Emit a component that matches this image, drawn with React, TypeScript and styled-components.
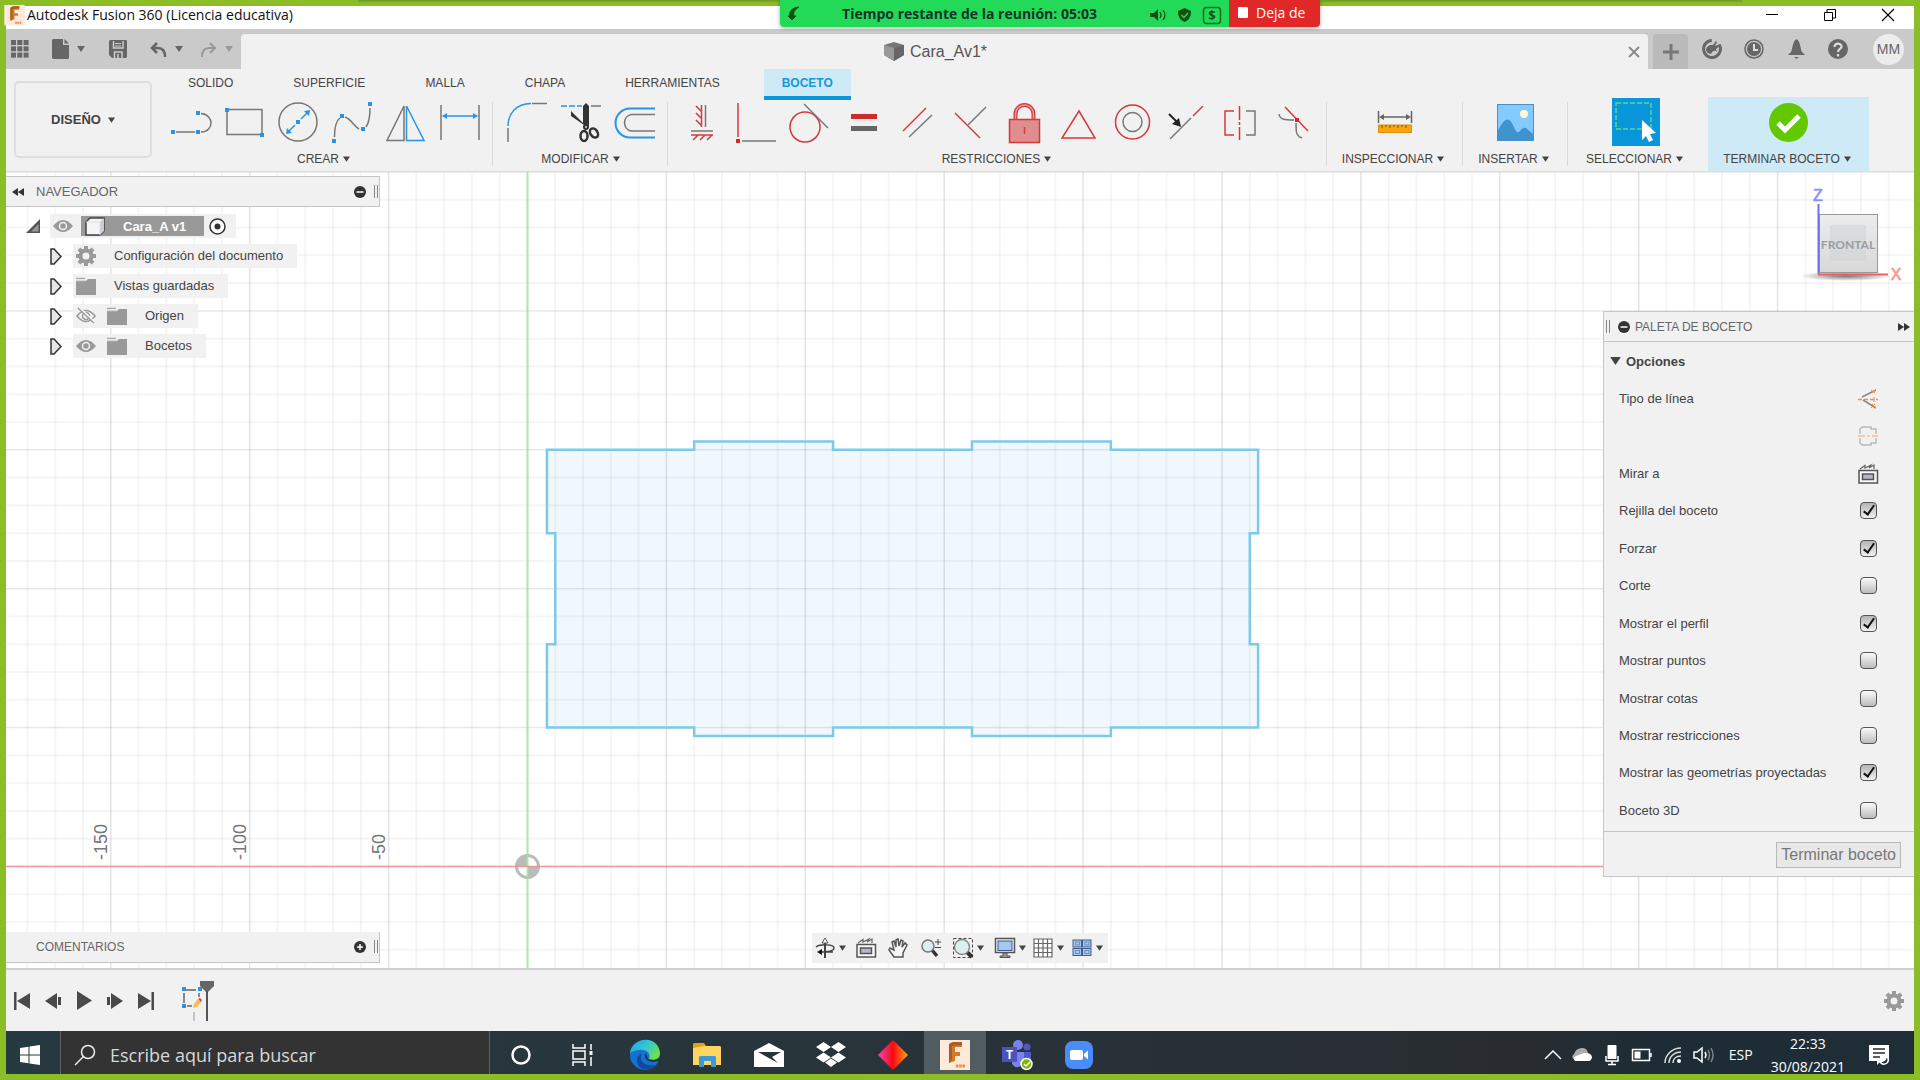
import React from "react";
import styled, { createGlobalStyle, css } from "styled-components";

const UI = `"Liberation Sans", Arial, sans-serif`;
const SYS = `"Open Sans", "Noto Sans", sans-serif`;
const RED = "#d6393b";
const BLUE = "#2a93e6";
const GRAY = "#777";

const Global = createGlobalStyle`
  *, *::before, *::after { box-sizing: border-box; }
  body { margin: 0; font-family: ${UI}; font-size: 13px; color: #444; }
  button, input { font: inherit; color: inherit; }
  button { margin: 0; padding: 0; border: 0; background: none; }
  svg { display: block; flex: none; overflow: visible; }
  ul { list-style: none; margin: 0; padding: 0; }
  h1, h2, h3 { margin: 0; font-weight: 400; }
`;

const Frame = styled.div`
  position: relative;
  display: flex;
  flex-direction: column;
  height: 100vh;
  padding: 6px;
  background: #8bbd27;
  overflow: hidden;
`;

/* ---------- title bar ---------- */
const TitleBar = styled.header`
  display: flex;
  align-items: center;
  height: 23px;
  padding: 0 14px 6px 1px;
  gap: 5px;
  background: #fff;
  flex: none;
`;
const WindowTitle = styled.h1`
  flex: 1;
  font: 14px/16px ${SYS};
  color: #111;
  white-space: nowrap;
`;
const WindowButtons = styled.div`
  display: flex;
  gap: 34px;
`;
const WinButton = styled.button`
  width: 24px;
  height: 16px;
  display: grid;
  place-items: center;
`;

/* ---------- meeting banner ---------- */
const Banner = styled.aside`
  position: absolute;
  top: 0;
  left: 780px;
  display: flex;
  width: 540px;
  height: 27px;
  border-radius: 0 0 4px 4px;
  overflow: hidden;
  box-shadow: 0 1px 4px rgba(0, 0, 0, 0.35);
  font: 14px/20px ${SYS};
`;
const BannerShadow = styled.div`
  position: absolute;
  top: 0;
  left: 358px;
  right: 178px;
  height: 3px;
  background: linear-gradient(#6f9722, #8bbd27);
`;
const BannerInfo = styled.div`
  display: flex;
  align-items: center;
  width: 449px;
  padding: 0 8px;
  background: #22da58;
  color: #14332c;
  font-weight: 700;
`;
const BannerText = styled.span`
  flex: 1;
  text-align: center;
  padding-right: 12px;
  white-space: nowrap;
`;
const BannerIcons = styled.div`
  display: flex;
  align-items: center;
  gap: 12px;
  padding-top: 3px;
`;
const BannerStop = styled.button`
  display: flex;
  flex: 1;
  align-items: center;
  gap: 8px;
  padding: 0 0 2px 9px;
  background: #e02828;
  color: #fff;
  white-space: nowrap;
`;
const StopSquare = styled.span`
  width: 10px;
  height: 11px;
  border-radius: 1px;
  background: #fff;
`;

/* ---------- application bar ---------- */
const AppBar = styled.div`
  display: flex;
  align-items: flex-end;
  height: 40px;
  background: #cacaca;
  color: #666;
  flex: none;
`;
const QuickTools = styled.div`
  display: flex;
  align-items: center;
  width: 235px;
  height: 40px;
  padding-left: 5px;
`;
const QuickButton = styled.button<{ $w: number; $dim?: boolean }>`
  display: flex;
  align-items: center;
  gap: 8px;
  width: ${(p) => p.$w}px;
  height: 30px;
  color: ${(p) => (p.$dim ? "#999" : "#666")};
`;
const DocTab = styled.div`
  flex: 1;
  display: flex;
  align-items: center;
  height: 35px;
  padding: 0 2px 0 8px;
  border-radius: 4px 4px 0 0;
  background: #f1f1f1;
`;
const DocName = styled.h2`
  flex: 1;
  display: flex;
  justify-content: center;
  align-items: center;
  gap: 6px;
  font-size: 16px;
  line-height: 20px;
  color: #555;
`;
const IconButton = styled.button`
  display: grid;
  place-items: center;
  width: 24px;
  height: 24px;
  flex: none;
`;
const NewTab = styled.button`
  display: grid;
  place-items: center;
  width: 35px;
  height: 35px;
  margin-left: 5px;
  border-radius: 4px 4px 0 0;
  background: #bababa;
  color: #777;
`;
const AppActions = styled.div`
  display: flex;
  align-items: center;
  gap: 18px;
  height: 40px;
  padding: 0 10px 0 12px;
`;
const Avatar = styled.button`
  width: 31px;
  height: 31px;
  margin: 0 0 0 5px;
  border-radius: 50%;
  background: #ececec;
  font-size: 14px;
  line-height: 31px;
  color: #666;
`;

/* ---------- ribbon ---------- */
const Ribbon = styled.div`
  display: flex;
  height: 103px;
  padding-left: 8px;
  background: #f1f1f1;
  border-bottom: 1px solid #dcdcdc;
  flex: none;
  overflow: hidden;
`;
const Workspace = styled.button`
  display: flex;
  align-items: center;
  justify-content: center;
  gap: 7px;
  width: 138px;
  height: 77px;
  margin-top: 12px;
  border: 2px solid #dedede;
  border-radius: 5px;
  font-weight: 700;
  color: #444;
  flex: none;
`;
const RibbonMain = styled.div`
  flex: 1;
  min-width: 0;
`;
const Tabs = styled.nav`
  display: flex;
  gap: 28px;
  height: 31px;
  padding-left: 20px;
`;
const Tab = styled.button<{ $on?: boolean }>`
  padding: 0 16px;
  border-bottom: 4px solid transparent;
  font-size: 12px;
  line-height: 24px;
  color: #444;
  ${(p) =>
    p.$on &&
    css`
      padding: 0 18px;
      background: #cdeaf6;
      border-color: #0a96d9;
      color: #1698db;
      font-weight: 700;
    `}
`;
const Groups = styled.div`
  display: flex;
  align-items: flex-start;
`;
const Group = styled.section<{ $pad?: string; $w?: number; $last?: boolean }>`
  display: flex;
  flex-direction: column;
  align-items: center;
  justify-content: space-between;
  flex: none;
  height: 64px;
  margin-top: 2px;
  padding: ${(p) => p.$pad || "0"};
  ${(p) => p.$w && `width: ${p.$w}px;`}
  border-right: ${(p) => (p.$last ? "0" : "1px solid #dadada")};
`;
const FinishGroup = styled(Group)`
  height: 74px;
  margin: -3px 0 0 4px;
  padding: 5px 0;
  background: #cdeaf6;
`;
const ToolRow = styled.div`
  display: flex;
  gap: 14px;
  height: 40px;
`;
const Tool = styled.button`
  width: 40px;
  height: 40px;
  display: flex;
  align-items: center;
  justify-content: center;
`;
const GroupLabel = styled.button`
  display: flex;
  align-items: center;
  gap: 4px;
  padding-right: 3px;
  font-size: 12px;
  line-height: 14px;
  color: #444;
  white-space: nowrap;
`;

/* ---------- canvas ---------- */
const Canvas = styled.main`
  position: relative;
  flex: 1;
  min-height: 0;
  display: flex;
  flex-direction: column;
  justify-content: space-between;
  background: #fff;
  overflow: hidden;
`;
const Drawing = styled.svg`
  position: absolute;
  inset: 0;
  width: 100%;
  height: 100%;
`;
const CanvasTop = styled.div`
  position: relative;
  display: flex;
  justify-content: space-between;
  align-items: flex-start;
`;
const CanvasBottom = styled.div`
  position: relative;
  display: grid;
  grid-template-columns: 1fr auto 1fr;
  align-items: center;
  padding-bottom: 5px;
`;
const Browser = styled.section`
  width: 374px;
  padding-top: 4px;
`;
const PanelHead = styled.div<{ $top?: boolean }>`
  display: flex;
  align-items: center;
  width: 374px;
  height: 31px;
  padding: 0 1px 0 6px;
  background: #f1f1f1;
  border: solid #c6c6c6;
  border-width: ${(p) => (p.$top ? "1px 1px 1px 0" : "0 1px 1px 0")};
`;
const PanelTitle = styled.h2<{ $size: number }>`
  flex: 1;
  margin-left: ${(p) => (p.$size === 13 ? 12 : 24)}px;
  font-size: ${(p) => p.$size}px;
  line-height: 16px;
  color: #666;
`;
const Handle = styled.span`
  width: 4px;
  height: 13px;
  margin-left: 8px;
  border: solid #888;
  border-width: 0 1px;
`;
const Tree = styled.ul`
  padding-top: 4px;
`;
const TreeRow = styled.li<{ $root?: boolean }>`
  display: flex;
  align-items: center;
  gap: ${(p) => (p.$root ? 10 : 12)}px;
  height: 30px;
  padding-left: ${(p) => (p.$root ? 20 : 44)}px;
`;
const TreeItem = styled.div<{ $root?: boolean }>`
  display: flex;
  align-items: center;
  gap: ${(p) => (p.$root ? 8 : 11)}px;
  height: 24px;
  padding: 0 ${(p) => (p.$root ? 10 : 14)}px 0 3px;
  background: #f1f1f1;
  color: #999;
`;
const TreeText = styled.button`
  margin-left: 7px;
  font-size: 13px;
  line-height: 20px;
  color: #444;
  white-space: nowrap;
`;
const RootName = styled.button`
  display: flex;
  align-items: center;
  gap: 18px;
  height: 20px;
  padding: 0 18px 0 4px;
  margin-right: -3px;
  background: #999;
  color: #fff;
  font-weight: 700;
`;
const RightColumn = styled.div`
  width: 311px;
`;
const CubeArea = styled.div`
  height: 139px;
`;
const Palette = styled.section`
  background: #f1f1f1;
  border: solid #c6c6c6;
  border-width: 1px 0 1px 1px;
`;
const PaletteHead = styled.div`
  display: flex;
  align-items: center;
  height: 30px;
  padding: 0 4px 0 2px;
  border-bottom: 1px solid #c6c6c6;
`;
const PaletteTitle = styled.h2`
  flex: 1;
  margin-left: 5px;
  font-size: 12px;
  line-height: 16px;
  color: #666;
`;
const PaletteHandle = styled(Handle)`
  margin: 0 8px 0 0;
`;
const Section = styled.button`
  display: flex;
  align-items: center;
  gap: 5px;
  height: 38px;
  padding-left: 6px;
  font-weight: 700;
`;
const Options = styled.div`
  display: flex;
  flex-direction: column;
  height: 451px;
  padding-bottom: 2px;
`;
const Option = styled.div`
  display: flex;
  flex: 1;
  align-items: center;
  justify-content: space-between;
  padding: 0 36px 0 15px;
`;
const Check = styled.input`
  appearance: none;
  width: 17px;
  height: 17px;
  margin: 0 1px 0 0;
  border: 1px solid #555;
  border-radius: 4px;
  background: linear-gradient(#fafafa, #bcbcbc);
  &:checked {
    background: linear-gradient(#b4b4b4, #f0f0f0);
  }
  &:checked::after {
    content: "";
    display: block;
    width: 6px;
    height: 12px;
    margin: 0 0 0 5px;
    border: solid #111;
    border-width: 0 2px 2px 0;
    transform: rotate(35deg);
  }
`;
const PaletteFoot = styled.div`
  display: flex;
  justify-content: flex-end;
  padding: 10px 13px 8px;
  border-top: 1px solid #c6c6c6;
`;
const FinishButton = styled.button`
  height: 26px;
  padding: 0 4px;
  border: 1px solid #b8b8b8;
  background: #e8e8e8;
  font-size: 16px;
  line-height: 24px;
  color: #777;
`;
const ViewBar = styled.nav`
  display: flex;
  align-items: center;
  width: 296px;
  height: 30px;
  padding: 0 3px;
  margin-top: 2px;
  background: #f1f1f1;
`;
const ViewButton = styled.button<{ $w: number }>`
  display: flex;
  align-items: center;
  gap: 4px;
  flex: none;
  width: ${(p) => p.$w}px;
  height: 24px;
`;

/* ---------- timeline ---------- */
const Timeline = styled.section`
  display: flex;
  align-items: center;
  height: 63px;
  padding: 0 8px 0 6px;
  border-top: 2px solid #cfcfcf;
  background: #f1f1f1;
  color: #4a4a4a;
  flex: none;
`;
const Transport = styled.div`
  display: flex;
  gap: 11px;
  flex: 1;
  align-items: center;
`;
const PlayButton = styled.button`
  display: flex;
  align-items: center;
  justify-content: center;
  width: 20px;
  height: 24px;
`;
const SketchFeature = styled.button`
  width: 36px;
  height: 40px;
  margin-left: 14px;
`;

/* ---------- taskbar ---------- */
const Taskbar = styled.footer`
  display: flex;
  height: 43px;
  background: linear-gradient(90deg, #263a42, #28343a 45%, #282c31 80%, #1e2c35 86%, #1f2e36);
  color: #fff;
  font-family: ${SYS};
  flex: none;
`;
const StartButton = styled.button`
  display: grid;
  place-items: center;
  width: 54px;
  padding: 4px 6px 0 0;
`;
const Search = styled.label`
  display: flex;
  align-items: center;
  gap: 15px;
  width: 430px;
  padding: 4px 14px 0;
  border: solid #5a6266;
  border-width: 0 1px;
  background: #333;
`;
const SearchInput = styled.input`
  flex: 1;
  min-width: 0;
  padding: 0;
  border: 0;
  outline: 0;
  background: none;
  font-size: 18px;
  line-height: 26px;
  &::placeholder {
    color: #d8d8d8;
    opacity: 1;
  }
`;
const Apps = styled.nav`
  display: flex;
  flex: 1;
`;
const AppButton = styled.button<{ $on?: boolean }>`
  display: grid;
  place-items: center;
  width: 62px;
  padding-top: 4px;
  ${(p) => p.$on && "background: #505c5f;"}
`;
const Tray = styled.div`
  display: flex;
  align-items: center;
  gap: 11px;
  padding: 4px 25px 0 0;
`;
const TrayText = styled.span`
  margin-left: 4px;
  font-size: 14px;
  line-height: 20px;
`;
const Clock = styled.time`
  display: flex;
  flex-direction: column;
  align-items: center;
  margin: 0 13px 0 7px;
  font-size: 14px;
  line-height: 23px;
`;

/* ---------- icons ---------- */
const Caret = ({ w = 8, h = 6, c = "currentColor" }: { w?: number; h?: number; c?: string }) => (
  <svg width={w} height={h} viewBox="0 0 8 6">
    <path d="M0 0H8L4 6Z" fill={c} />
  </svg>
);

const Art = ({ w, h = w, children }: { w: number; h?: number; children: React.ReactNode }) => (
  <svg width={w} height={h} viewBox={`0 0 ${w} ${h}`} fill="none" strokeWidth="1.5">
    {children}
  </svg>
);

const Dots = ({ at, c = BLUE }: { at: number[][]; c?: string }) => (
  <>
    {at.map(([x, y]) => (
      <rect key={`${x},${y}`} x={x - 2} y={y - 2} width="4" height="4" fill={c} />
    ))}
  </>
);

type ToolDef = [string, React.ReactNode];

const createTools: ToolDef[] = [
  ["Línea", <><path d="M6 30H25M31 11.5C38 12 41 17 41 21S38 30 31 30" stroke={GRAY} /><Dots at={[[3, 30], [28, 30], [28, 11]]} /></>],
  ["Rectángulo", <><rect x="3" y="7.5" width="35" height="25" stroke={GRAY} /><Dots at={[[3, 8], [38, 33]]} /></>],
  ["Círculo", <><circle cx="20" cy="20" r="19" stroke={GRAY} /><path d="M23 17L29 11M17 23L11 29" stroke={BLUE} /><path d="M32 8L31 14L26 9ZM8 32L9 26L14 31Z" fill={BLUE} /><Dots at={[[20, 20]]} /></>],
  ["Spline", <><path d="M2.500 35C2.500 25 5 18 8 16M13 15C19 17 22 24 27 27M34 25C37 21 38 13 38 6" stroke={GRAY} /><Dots at={[[2, 39], [10, 14], [31, 27], [38, 2]]} /></>],
  ["Simetría", <><path d="M18 4V38.500H1Z" stroke={GRAY} /><path d="M20.500 4V38.500H38Z" stroke={BLUE} /></>],
  ["Cota", <><path d="M1 3V38M39 3V38" stroke={GRAY} /><path d="M3 14H37" stroke={BLUE} /><path d="M2 14L7 11V17ZM38 14L33 11V17Z" fill={BLUE} /></>],
];

const modifyTools: ToolDef[] = [
  ["Empalme", <><path d="M0 24C0 12 8 1.500 23 1.500" stroke={BLUE} /><path d="M0 26V40M24 1.500H39" stroke={GRAY} /></>],
  ["Recortar", <>
    <path d="M-1 4H20" stroke={BLUE} strokeDasharray="6 2" /><path d="M29 4H39" stroke={GRAY} />
    <path d="M21 4L24 1L27 4V24H23.500L9 14V9L21 21Z" fill="#333" />
    <circle cx="24" cy="25" r="3" fill="#333" /><circle cx="24" cy="25" r="1" fill="#ddd" />
    <ellipse cx="22" cy="34" rx="3.500" ry="5" stroke="#333" strokeWidth="2.500" />
    <ellipse cx="32" cy="31" rx="3.500" ry="5" transform="rotate(-35 32 31)" stroke="#333" strokeWidth="2.500" />
  </>],
  ["Desfase", <><path d="M39 6.500H14a14.500 14.500 0 0 0 0 29H39" stroke={BLUE} strokeWidth="2" /><path d="M39 12.500H15a8.500 8.500 0 0 0 0 16.500H39" stroke={GRAY} /></>],
];

const constraintTools: ToolDef[] = [
  ["Horizontal/vertical", <><path d="M20.500 3V25M20 9L15 4M20 16L15 11M20 23L15 18M10 33H32M12 38L17 33M19 38L24 33M26 38L31 33" stroke={RED} /><path d="M24.500 3V25M10 29H32" stroke={GRAY} /></>],
  ["Coincidente", <><path d="M3 1V35" stroke={RED} /><path d="M7 39H41" stroke={GRAY} /><Dots at={[[3, 39]]} c="#cf2b2b" /></>],
  ["Tangente", <><circle cx="16" cy="25" r="15" stroke={RED} /><path d="M15 2L39 26" stroke={GRAY} /></>],
  ["Igual", <><rect x="8" y="12" width="26" height="5" fill="#cf2b2b" /><rect x="8" y="24" width="26" height="5" fill="#666" /></>],
  ["Paralelo", <><path d="M6 29L29 6" stroke={RED} /><path d="M12 35L35 13" stroke={GRAY} /></>],
  ["Perpendicular", <><path d="M4 11L29 36" stroke={RED} /><path d="M17 23L35 5" stroke={GRAY} /></>],
  ["Fijar", <><path d="M10.500 17V12a9 9 0 0 1 18 0V17" stroke={RED} strokeWidth="4" /><path d="M10.500 17V12a9 9 0 0 1 18 0V17" stroke="#e29a9a" strokeWidth="1.500" /><rect x="4.500" y="17.500" width="30" height="23" fill="#df8d8d" stroke={RED} /><path d="M19.500 25V32" stroke={RED} /></>],
  ["Punto medio", <path d="M20 9L36 36H3Z" stroke={RED} />],
  ["Concéntrico", <><circle cx="19.500" cy="20" r="17" stroke={RED} /><circle cx="19.500" cy="20" r="9.500" stroke={GRAY} /></>],
  ["Colineal", <><path d="M3 37L24 16" stroke={GRAY} /><path d="M26 14L36 4" stroke={RED} /><path d="M2 12L10 20" stroke="#222" strokeWidth="2" /><path d="M14 25L12 16L5 22Z" fill="#222" /></>],
  ["Simétrico", <><path d="M13 9H4V33H13M18.500 4V18M18.500 20V23M18.500 25V38" stroke={RED} /><path d="M25 9H34V33H25" stroke={GRAY} /></>],
  ["Curvatura", <><path d="M10 5L33 29" stroke={RED} /><path d="M4 12C5 18 10 18 19 18M21 21C21 30 21 34 27 36" stroke={GRAY} /><Dots at={[[22, 18]]} c="#cf2b2b" /></>],
];

const Tools = ({ items }: { items: ToolDef[] }) => (
  <ToolRow>
    {items.map(([name, art]) => (
      <Tool key={name} aria-label={name}>
        <Art w={40}>{art}</Art>
      </Tool>
    ))}
  </ToolRow>
);

const Label = ({ children }: { children: string }) => (
  <GroupLabel>
    {children}
    <Caret w={7} h={6} />
  </GroupLabel>
);

const teeth = [0, 45, 90, 135, 180, 225, 270, 315];
const Gear = () => (
  <Art w={20}>
    <circle cx="10" cy="10" r="5.500" stroke="#999" strokeWidth="4" />
    {teeth.map((a) => (
      <rect key={a} x="8" y="0" width="4" height="4" fill="#999" transform={`rotate(${a} 10 10)`} />
    ))}
  </Art>
);
const Eye = ({ off }: { off?: boolean }) => (
  <Art w={20} h={16}>
    {off ? (
      <>
        <path d="M1 8Q10 -3 19 8Q10 19 1 8Z" stroke="#999" />
        <circle cx="10" cy="8" r="3.500" stroke="#999" />
        <path d="M2 0L18 15" stroke="#999" />
        <path d="M4 0L19 14" stroke="#f1f1f1" />
      </>
    ) : (
      <>
        <path d="M0 8Q10 -4 20 8Q10 20 0 8Z" fill="#999" />
        <circle cx="10" cy="8" r="3.500" stroke="#f1f1f1" />
      </>
    )}
  </Art>
);
const Folder = () => (
  <Art w={20} h={17}>
    <path d="M0 3H10L12 1H20V17H0Z" fill="#999" />
    <path d="M0 0.500H9M0 3H10" stroke="#aaa" />
    <path d="M0 2H10" stroke="#f1f1f1" strokeWidth="1" />
  </Art>
);
const Expand = () => (
  <Art w={11} h={17}>
    <path d="M1 1H4L11 8.500L4 16H1Z" fill="#e6e6e6" stroke="#333" />
  </Art>
);
const Minus = ({ plus }: { plus?: boolean }) => (
  <Art w={12}>
    <circle cx="6" cy="6" r="6" fill="#333" />
    <path d={plus ? "M3 6H9M6 3V9" : "M2.500 6H9.500"} stroke="#fff" />
  </Art>
);
const LookAt = () => (
  <Art w={20}>
    <path d="M2 5L7 1.500V4L13 1L11 4L16 1V5" stroke="#666" strokeWidth="1.200" />
    <rect x="1" y="6.500" width="18.500" height="12.500" fill="#f8f8f8" stroke="#555" />
    <rect x="4.500" y="10" width="11" height="5.500" fill="#b4b8c6" stroke="#555" />
  </Art>
);

/* ---------- sketch drawing ---------- */
// One sketch millimetre is 2.778 px; the model origin is where both axes meet.
const MM = 2.778;
const OX = 521.5;
const OY = 694.5;
const px = (mm: number) => OX + mm * MM;
const py = (mm: number) => OY - mm * MM;
const outline: number[][] = [
  [7, 150], [60, 150], [60, 153], [110, 153], [110, 150], [160, 150], [160, 153], [210, 153], [210, 150], [263, 150],
  [263, 120], [260, 120], [260, 80], [263, 80], [263, 50], [210, 50], [210, 47], [160, 47], [160, 50], [110, 50],
  [110, 47], [60, 47], [60, 50], [7, 50], [7, 80], [10, 80], [10, 120], [7, 120],
];
const vLines = Array.from({ length: 70 }, (_, i) => i - 19);
const hLines = Array.from({ length: 36 }, (_, i) => i - 10);

const SketchDrawing = () => (
  <Drawing aria-label="Boceto">
    <polygon points={outline.map(([x, y]) => `${px(x)},${py(y)}`).join(" ")} fill="#f0f8fe" />
    {vLines.map((i) => (
      <line key={`v${i}`} x1={px(i * 10)} x2={px(i * 10)} y1="0" y2="100%" stroke="#000" strokeOpacity={i % 5 ? 0.04 : 0.11} strokeWidth={i % 5 ? 2 : 1.5} />
    ))}
    {hLines.map((i) => (
      <line key={`h${i}`} y1={py(i * 10)} y2={py(i * 10)} x1="0" x2="100%" stroke="#000" strokeOpacity={i % 5 ? 0.04 : 0.09} strokeWidth={i % 5 ? 2 : 1.5} />
    ))}
    <circle cx={OX} cy={OY} r="11" fill="#fff" stroke="#bbb" strokeWidth="3" />
    <path d={`M${OX} ${OY}V${OY - 12}A12 12 0 0 0 ${OX - 12} ${OY}ZM${OX} ${OY}V${OY + 12}A12 12 0 0 0 ${OX + 12} ${OY}Z`} fill="#bbb" />
    <line x1={OX} x2={OX} y1="0" y2="100%" stroke="#9be89b" strokeOpacity="0.75" strokeWidth="2" />
    <line y1={OY} y2={OY} x1="0" x2="100%" stroke="#ee8f8f" strokeOpacity="0.9" strokeWidth="1.600" />
    <polygon points={outline.map(([x, y]) => `${px(x)},${py(y)}`).join(" ")} fill="none" stroke="#7ccaea" strokeWidth="2.500" />
    {[-150, -100, -50].map((n) => (
      <text key={n} transform={`translate(${Math.round(px(n)) - 4} ${OY - 6.5}) rotate(-90)`} fontFamily={UI} fontSize="18" fill="#777">
        {n}
      </text>
    ))}
  </Drawing>
);

const ViewCube = () => (
  <svg width="311" height="139" viewBox="0 0 311 139">
    <defs>
      <linearGradient id="cubeFace" x1="0" y1="0" x2="0" y2="1">
        <stop offset="0" stopColor="#ececec" />
        <stop offset="1" stopColor="#d8d8d8" />
      </linearGradient>
      <radialGradient id="cubeShadow">
        <stop offset="0" stopColor="#777" />
        <stop offset="1" stopColor="#777" stopOpacity="0" />
      </radialGradient>
    </defs>
    <ellipse cx="243" cy="104" rx="46" ry="5" fill="url(#cubeShadow)" />
    <rect x="216.500" y="42.500" width="58" height="58" fill="url(#cubeFace)" stroke="#999" />
    <rect x="227" y="53" width="36" height="36" fill="#d0d3d7" opacity="0.6" />
    <path d="M215.500 32V102" stroke="#6f6fee" strokeWidth="2" />
    <path d="M215 102.500H285" stroke="#f06060" strokeWidth="2" />
    <g fontFamily={UI}>
      <text x="215" y="29" fontSize="16" fill="#8f8ffa" textAnchor="middle" stroke="#8f8ffa" strokeWidth="0.600">Z</text>
      <text x="293" y="108" fontSize="16" fill="#fb9393" textAnchor="middle" stroke="#fb9393" strokeWidth="0.600">X</text>
      <text x="245" y="77" fontSize="12" fontWeight="700" fill="#989da4" textAnchor="middle" fontFamily="Lato, sans-serif">FRONTAL</text>
    </g>
  </svg>
);

const options: [string, boolean][] = [
  ["Rejilla del boceto", true],
  ["Forzar", true],
  ["Corte", false],
  ["Mostrar el perfil", true],
  ["Mostrar puntos", false],
  ["Mostrar cotas", false],
  ["Mostrar restricciones", false],
  ["Mostrar las geometrías proyectadas", true],
  ["Boceto 3D", false],
];

const FusionLogo = ({ s, small }: { s: number; small?: boolean }) => (
  <svg width={small ? 15 : s} height={s} viewBox={small ? "4 2 22 24" : "0 0 30 30"}>
    <rect width="30" height="30" fill="#fdeada" />
    <path d="M9 4L13 2H22V7H15V12H20V16H15V21L9 23Z" fill="#d17a2a" />
    <path d="M13 2L9 4V23L12 20V6L22 5V2Z" fill="#a95f1e" />
    <path d="M16 26H25" stroke="#ee8a42" strokeWidth="3" strokeDasharray="2.500 0.700" />
  </svg>
);

export default function App() {
  return (
    <>
      <Global />
      <Frame>
        <TitleBar>
          <FusionLogo s={17} small />
          <WindowTitle>Autodesk Fusion 360 (Licencia educativa)</WindowTitle>
          <WindowButtons>
            <WinButton aria-label="Minimizar"><Art w={12}><path d="M0 5.500H12" stroke="#000" strokeWidth="1" /></Art></WinButton>
            <WinButton aria-label="Restaurar"><Art w={12}><path d="M0.500 3.500H8.500V11.500H0.500ZM3 3V0.500H11.500V9H9" stroke="#000" strokeWidth="1" /></Art></WinButton>
            <WinButton aria-label="Cerrar"><Art w={12}><path d="M0 0L12 12M12 0L0 12" stroke="#000" strokeWidth="1.200" /></Art></WinButton>
          </WindowButtons>
        </TitleBar>

        <AppBar>
          <QuickTools>
            <QuickButton $w={41} aria-label="Panel de datos">
              <Art w={18}>
                {[0, 1, 2].map((r) => [0, 1, 2].map((c) => <rect key={`${r}${c}`} x={c * 6.3} y={r * 6.3} width="5" height="5" fill="#666" />))}
              </Art>
            </QuickButton>
            <QuickButton $w={57} aria-label="Archivo">
              <Art w={17} h={20}><path d="M1 0H11V6H17V19L16 20H1L0 19V1ZM12.500 0L17 4.500H12.500Z" fill="#666" /></Art>
              <Caret w={8} h={6} />
            </QuickButton>
            <QuickButton $w={41} aria-label="Guardar">
              <Art w={18}><path d="M1 0H17L18 1V17L17 18H3L0 15V1Z" fill="#666" /><path d="M4.500 1V8H14V1" stroke="#ccc" /><path d="M6 3.500H12M6 6H12" stroke="#ccc" strokeWidth="1" /><path d="M5.500 18V12H13V18" stroke="#ccc" /><path d="M9 14V18" stroke="#ccc" /></Art>
            </QuickButton>
            <QuickButton $w={50} aria-label="Deshacer">
              <Art w={17} h={15}><path d="M2 6H8Q15 6 15 15M7 1L2 6L7 11" stroke="#666" strokeWidth="2.500" /></Art>
              <Caret w={8} h={6} />
            </QuickButton>
            <QuickButton $w={36} $dim aria-label="Rehacer">
              <Art w={17} h={15}><path d="M15 6H9Q2 6 2 15M10 1L15 6L10 11" stroke="#999" strokeWidth="2" /></Art>
              <Caret w={8} h={6} />
            </QuickButton>
          </QuickTools>
          <DocTab>
            <DocName>
              <Art w={20} h={19}><path d="M0 3L10 0L20 3V13L10 19L0 13Z" fill="#777" /><path d="M0 3L10 6V19L0 13Z" fill="#999" /><path d="M10 6L20 3V13L10 19Z" fill="#666" /></Art>
              Cara_Av1*
            </DocName>
            <IconButton aria-label="Cerrar documento"><Art w={12}><path d="M1 1L11 11M11 1L1 11" stroke="#888" strokeWidth="1.800" /></Art></IconButton>
          </DocTab>
          <NewTab aria-label="Nuevo documento"><Art w={16}><path d="M0 8H16M8 0V16" stroke="#777" strokeWidth="3" /></Art></NewTab>
          <AppActions>
            <IconButton aria-label="Extensiones"><Art w={20}><circle cx="10" cy="10" r="8.500" stroke="#666" strokeWidth="3" strokeDasharray="44 9.400" transform="rotate(-30 10 10)" /><path d="M9 15C4 14 3 11 5 8L8 6L11 6L14 2L15 3L13 7L18 5L18 7L14 10L15 13C13 11 11 11 9 15Z" fill="#666" /></Art></IconButton>
            <IconButton aria-label="Estado de los trabajos"><Art w={20}><circle cx="10" cy="10" r="9" stroke="#666" /><circle cx="10" cy="10" r="7" fill="#666" /><path d="M10 5V11H14" stroke="#ddd" strokeWidth="2" /></Art></IconButton>
            <IconButton aria-label="Notificaciones"><Art w={17} h={20}><path d="M8.500 0C13 3 12 9 14 13L17 16H0L3 13C5 9 4 3 8.500 0Z" fill="#666" /><path d="M6 18H11L8.500 20Z" fill="#666" /></Art></IconButton>
            <IconButton aria-label="Ayuda"><Art w={20}><circle cx="10" cy="10" r="10" fill="#666" /><path d="M6.500 8C6.500 3 14 4 13.500 8C13 10 10 10 10 13M10 15V17.500" stroke="#ddd" strokeWidth="2.200" /></Art></IconButton>
            <Avatar>MM</Avatar>
          </AppActions>
        </AppBar>

        <Ribbon>
          <Workspace>DISEÑO <Caret w={7} h={6} /></Workspace>
          <RibbonMain>
            <Tabs>
              {["SOLIDO", "SUPERFICIE", "MALLA", "CHAPA", "HERRAMIENTAS", "BOCETO"].map((t) => (
                <Tab key={t} $on={t === "BOCETO"}>{t}</Tab>
              ))}
            </Tabs>
            <Groups>
              <Group $pad="0 12px 0 18px"><Tools items={createTools} /><Label>CREAR</Label></Group>
              <Group $pad="0 11px 0 15px"><Tools items={modifyTools} /><Label>MODIFICAR</Label></Group>
              <Group $pad="0 11px 0 13px"><Tools items={constraintTools} /><Label>RESTRICCIONES</Label></Group>
              <Group $w={136}>
                <Tool aria-label="Medir">
                  <Art w={34} h={22}>
                    <path d="M0.500 0V12M33.500 0V12M3 6H31" stroke="#666" /><path d="M1 6L6 3V9ZM33 6L28 3V9Z" fill="#666" />
                    <rect x="0.500" y="14" width="33" height="7.500" fill="#fba50c" stroke="#de920d" strokeWidth="1" />
                    <path d="M4 14V17M8 14V16M12 14V17M16 14V16M20 14V17M24 14V16M28 14V17" stroke="#7a520a" strokeWidth="1" />
                  </Art>
                </Tool>
                <Label>INSPECCIONAR</Label>
              </Group>
              <Group $w={105}>
                <Tool aria-label="Insertar imagen">
                  <Art w={37}>
                    <rect x="0.500" y="0.500" width="36" height="36" fill="#82caff" stroke="#4a90c4" strokeWidth="1" />
                    <circle cx="27" cy="10" r="4" fill="#fbfad0" />
                    <path d="M1 26C5 20 8 14 12 16C16 18 17 25 20 28C22 30 25 22 29 24L36 30V36H1Z" fill="#3f94cf" />
                  </Art>
                </Tool>
                <Label>INSERTAR</Label>
              </Group>
              <Group $w={136} $last>
                <Tool aria-label="Seleccionar">
                  <Art w={48}>
                    <rect width="48" height="48" fill="#0a96da" />
                    <rect x="4" y="5" width="35" height="26" stroke="#56d698" strokeDasharray="5 2" />
                    <path d="M30 22L44 35L38 36L41 42L37 44L34 38L30 42Z" fill="#fff" />
                  </Art>
                </Tool>
                <Label>SELECCIONAR</Label>
              </Group>
              <FinishGroup $w={161} $last>
                <Tool aria-label="Terminar boceto">
                  <Art w={39}><circle cx="19.500" cy="19.500" r="19.500" fill="#64c800" /><path d="M9 20L16 27L30 13" stroke="#fff" strokeWidth="5" /></Art>
                </Tool>
                <Label>TERMINAR BOCETO</Label>
              </FinishGroup>
            </Groups>
          </RibbonMain>
        </Ribbon>

        <Canvas>
          <SketchDrawing />
          <CanvasTop>
            <Browser>
              <PanelHead $top>
                <Art w={12} h={8}><path d="M6 0V8L0 4ZM12 0V8L6 4Z" fill="#333" /></Art>
                <PanelTitle $size={13}>NAVEGADOR</PanelTitle>
                <Minus />
                <Handle />
              </PanelHead>
              <Tree>
                <TreeRow $root>
                  <Art w={14}><path d="M14 0V14H0Z" fill="#555" /><path d="M12.500 5V12.500H5Z" fill="#999" /></Art>
                  <TreeItem $root>
                    <Eye />
                    <RootName>
                      <Art w={20} h={19}><path d="M1 5L5 1H19V14L15 18H1Z" fill="#f5f5f8" stroke="#444" /><path d="M15 5L19 1V14L15 18Z" fill="#c9ccd4" /><path d="M1 5H15V18" stroke="#dcdce4" strokeWidth="1" /></Art>
                      Cara_A v1
                    </RootName>
                    <Art w={17}><circle cx="8.500" cy="8.500" r="7.500" stroke="#333" fill="#fff" /><circle cx="8.500" cy="8.500" r="3" fill="#333" /></Art>
                  </TreeItem>
                </TreeRow>
                <TreeRow><Expand /><TreeItem><Gear /><TreeText>Configuración del documento</TreeText></TreeItem></TreeRow>
                <TreeRow><Expand /><TreeItem><Folder /><TreeText>Vistas guardadas</TreeText></TreeItem></TreeRow>
                <TreeRow><Expand /><TreeItem><Eye off /><Folder /><TreeText>Origen</TreeText></TreeItem></TreeRow>
                <TreeRow><Expand /><TreeItem><Eye /><Folder /><TreeText>Bocetos</TreeText></TreeItem></TreeRow>
              </Tree>
            </Browser>
            <RightColumn>
              <CubeArea><ViewCube /></CubeArea>
              <Palette>
                <PaletteHead>
                  <PaletteHandle />
                  <Minus />
                  <PaletteTitle>PALETA DE BOCETO</PaletteTitle>
                  <Art w={12} h={8}><path d="M0 0V8L6 4ZM6 0V8L12 4Z" fill="#333" /></Art>
                </PaletteHead>
                <Section><Caret w={11} h={8} />Opciones</Section>
                <Options>
                  <Option>
                    Tipo de línea
                    <Art w={20}><path d="M4 8L18 1M5 11L18 19" stroke="#888" /><path d="M0 10.500H20" stroke="#ec8d55" strokeDasharray="4 2" /><path d="M13 1L17 4M14 4L18 0M13 19L17 15M14 15L18 19M16 8V13" stroke="#ec8d55" strokeWidth="1" /></Art>
                  </Option>
                  <Option>
                    <span />
                    <Art w={20}><path d="M2 8V3L4 1H13V3H18V8M2 12V17L4 19H13V17H18V12" stroke="#bbb" /><path d="M0 10H20" stroke="#f3bf9f" strokeDasharray="7 2 3 2" /></Art>
                  </Option>
                  <Option>Mirar a<LookAt /></Option>
                  {options.map(([name, on]) => (
                    <Option as="label" key={name}>
                      {name}
                      <Check type="checkbox" defaultChecked={on} />
                    </Option>
                  ))}
                </Options>
                <PaletteFoot><FinishButton>Terminar boceto</FinishButton></PaletteFoot>
              </Palette>
            </RightColumn>
          </CanvasTop>
          <CanvasBottom>
            <PanelHead>
              <PanelTitle $size={12}>COMENTARIOS</PanelTitle>
              <Minus plus />
              <Handle />
            </PanelHead>
            <ViewBar>
              <ViewButton $w={41} aria-label="Órbita">
                <Art w={20}><path d="M10 5V20" stroke="#444" strokeWidth="2" /><path d="M10 0L13 5H7Z" fill="#fff" stroke="#555" strokeWidth="1" /><path d="M4 14H18M1 9C5 6 19 6 19 10C19 14 9 14 4 14" stroke="#444" /><path d="M2 14L7 11V17Z" fill="#111" /></Art>
                <Caret w={7} h={6} />
              </ViewButton>
              <ViewButton $w={32} aria-label="Mirar a"><LookAt /></ViewButton>
              <ViewButton $w={33} aria-label="Encuadre">
                <Art w={20}><path d="M6 19L1 12L2 10L6 12L4 4L6 3L8 9L8 2L10 1L11 8L13 2L15 3L14 9L17 5L19 7L15 15V19Z" fill="#f5f5f5" stroke="#555" /></Art>
              </ViewButton>
              <ViewButton $w={32} aria-label="Zoom">
                <Art w={20}><path d="M11 12L16 18" stroke="#333" strokeWidth="3.500" /><circle cx="7" cy="8" r="6" fill="#dceef0" stroke="#777" /><path d="M14 4H20M17 1V7M14 9.500H20" stroke="#444" strokeWidth="1" /></Art>
              </ViewButton>
              <ViewButton $w={42} aria-label="Ajustar">
                <Art w={20}><rect x="0.500" y="0.500" width="19" height="19" stroke="#444" strokeWidth="1" strokeDasharray="3 2" /><path d="M14 14L19 19" stroke="#333" strokeWidth="4" /><circle cx="9" cy="9" r="7.500" fill="#dceeee" stroke="#888" /></Art>
                <Caret w={7} h={6} />
              </ViewButton>
              <ViewButton $w={38} aria-label="Visualización">
                <Art w={20}><rect x="0.500" y="0.500" width="19" height="14" fill="#f6f6f6" stroke="#555" /><rect x="3" y="3" width="14" height="9.500" fill="#a9c8ee" stroke="#335a96" strokeWidth="1" /><path d="M8 15V18H5V19.500H15V18H12V15Z" fill="#999" stroke="#555" strokeWidth="1" /></Art>
                <Caret w={7} h={6} />
              </ViewButton>
              <ViewButton $w={39} aria-label="Rejilla">
                <Art w={20}><path d="M1 1H19V19H1ZM1 5.500H19M1 10H19M1 14.500H19M5.500 1V19M10 1V19M14.500 1V19" fill="#fff" stroke="#666" strokeWidth="1.200" /></Art>
                <Caret w={7} h={6} />
              </ViewButton>
              <ViewButton $w={32} aria-label="Ventanas">
                <Art w={20} h={18}>
                  {[[1, 1], [10.5, 1], [1, 9.5], [10.5, 9.5]].map(([x, y]) => (
                    <g key={`${x}${y}`} stroke="#3d5f8e" strokeWidth="1"><rect x={x} y={y} width="8.500" height="7" fill="#a9c8ee" /><rect x={x + 2.5} y={y + 2} width="4" height="3" stroke="#6b90c0" /></g>
                  ))}
                </Art>
                <Caret w={7} h={6} />
              </ViewButton>
            </ViewBar>
          </CanvasBottom>
        </Canvas>

        <Timeline>
          <Transport>
            <PlayButton aria-label="Inicio"><Art w={16} h={18}><path d="M0 0H2.500V18H0ZM16 1V17L3 9Z" fill="#4a4a4a" /></Art></PlayButton>
            <PlayButton aria-label="Paso atrás"><Art w={16} h={16}><path d="M12 0V16L0 8ZM13 4H16V12H13Z" fill="#4a4a4a" /></Art></PlayButton>
            <PlayButton aria-label="Reproducir"><Art w={15} h={19}><path d="M0 0L15 9.500L0 19Z" fill="#4a4a4a" /></Art></PlayButton>
            <PlayButton aria-label="Paso adelante"><Art w={16} h={16}><path d="M4 0V16L16 8ZM0 4H3V12H0Z" fill="#4a4a4a" /></Art></PlayButton>
            <PlayButton aria-label="Final"><Art w={16} h={18}><path d="M13.500 0H16V18H13.500ZM0 1V17L13 9Z" fill="#4a4a4a" /></Art></PlayButton>
            <SketchFeature aria-label="Boceto1">
              <Art w={36} h={40}>
                <path d="M5 9H15M3 12V22M6 25H11M18 12V16" stroke="#666" />
                <Dots at={[[3, 8], [19, 8], [3, 25]]} />
                <path d="M13 23L17 18L20 21L16 26L12 27Z" fill="#fbc04a" /><path d="M17 18L19 17L21 19L20 21Z" fill="#ee3c4c" />
                <path d="M13 31V40" stroke="#c4c4c4" strokeWidth="2" />
                <path d="M19 0H33V5L27 11H25L19 5Z" fill="#666" /><path d="M26 10V40" stroke="#555" strokeWidth="2" />
              </Art>
            </SketchFeature>
          </Transport>
          <IconButton aria-label="Preferencias"><Gear /></IconButton>
        </Timeline>

        <Taskbar>
          <StartButton aria-label="Inicio de Windows"><Art w={20}><path d="M0 3L8.500 1.800V9.500H0ZM9.500 1.600L20 0V9.500H9.500ZM0 10.500H8.500V18.200L0 17ZM9.500 10.500H20V20L9.500 18.400Z" fill="#fff" /></Art></StartButton>
          <Search>
            <Art w={20}><circle cx="13" cy="7" r="6.500" stroke="#eee" /><path d="M8.500 11.500L0 20" stroke="#eee" /></Art>
            <SearchInput aria-label="Buscar" placeholder="Escribe aquí para buscar" />
          </Search>
          <Apps>
            <AppButton aria-label="Cortana"><Art w={20}><circle cx="10" cy="10" r="8.500" stroke="#fff" strokeWidth="2.500" /></Art></AppButton>
            <AppButton aria-label="Vista de tareas"><Art w={22} h={22}><path d="M1 0V4H13V0M1 7H13V15H1ZM1 22V18H13V22M19 0V6M19 13V22" stroke="#fff" /><rect x="17.500" y="7" width="3" height="4" fill="#fff" /></Art></AppButton>
            <AppButton aria-label="Edge">
              <Art w={30}>
                <defs>
                  <linearGradient id="edgeTop" x1="0" y1="0" x2="1" y2="0.500"><stop offset="0" stopColor="#22a3e8" /><stop offset="0.600" stopColor="#37c8cf" /><stop offset="1" stopColor="#6be04d" /></linearGradient>
                </defs>
                <circle cx="15" cy="15" r="15" fill="#1272d0" />
                <path d="M0 13C2 -3 28 -6 30 13C30 19 25 21 19 19C22 11 12 6 0 13Z" fill="url(#edgeTop)" />
                <path d="M12 14C8 20 14 27 26 25C20 32 8 31 7 21C7 17 9 14 12 14Z" fill="#10489a" />
                <path d="M16 13C13 16 16 22 24 22L28 21L30 24V17C28 20 22 21 18 19Z" fill="#28343a" />
              </Art>
            </AppButton>
            <AppButton aria-label="Explorador"><Art w={28} h={24}><path d="M0 1L1 0H11L13 3V6H0Z" fill="#e0a312" /><path d="M0 5L12 3H27L28 4V22H0Z" fill="#ffd562" /><path d="M6 24V14L7 13H22L23 14V24H18V18H11V24Z" fill="#3e97d6" /></Art></AppButton>
            <AppButton aria-label="Correo"><Art w={30} h={24}><path d="M0 8L15 0L30 8V24H0Z" fill="#fff" /><path d="M4 9H27L18 14L24 20Z" fill="#28343a" /></Art></AppButton>
            <AppButton aria-label="Dropbox"><Art w={30} h={25}><path d="M7.500 0L15 5L7.500 10L0 5ZM22.500 0L30 5L22.500 10L15 5ZM7.500 10.500L15 15.500L7.500 20.500L0 15.500ZM22.500 10.500L30 15.500L22.500 20.500L15 15.500ZM15 16.500L21 20.500L15 25L9 20.500Z" fill="#fff" /></Art></AppButton>
            <AppButton aria-label="Diamante">
              <Art w={30}>
                <defs><linearGradient id="gem"><stop offset="0" stopColor="#ee49b0" /><stop offset="0.500" stopColor="#fa0810" /><stop offset="1" stopColor="#ffa415" /></linearGradient></defs>
                <path d="M15 0L30 15L15 30L0 15Z" fill="url(#gem)" />
              </Art>
            </AppButton>
            <AppButton $on aria-label="Fusion 360"><FusionLogo s={30} /></AppButton>
            <AppButton aria-label="Teams">
              <Art w={30}>
                <circle cx="16" cy="5" r="5" fill="#7b83eb" /><circle cx="25" cy="7" r="3.500" fill="#5059c9" />
                <path d="M20 12H29V21Q28 25 20 24Z" fill="#5059c9" /><path d="M10 12H22V22Q20 28 13 27L10 24Z" fill="#7b83eb" />
                <rect x="0" y="7" width="15" height="15" fill="#4b53bc" /><text x="7.500" y="19" fontSize="12" fontWeight="700" textAnchor="middle" fill="#fff" fontFamily={SYS}>T</text>
                <circle cx="24.500" cy="24" r="5.500" fill="#7ab800" stroke="#fff" /><path d="M22 24L24 26L28 22" stroke="#fff" />
              </Art>
            </AppButton>
            <AppButton aria-label="Zoom"><Art w={28}><rect width="28" height="28" rx="8" fill="#4a8df8" /><rect x="5" y="9" width="13" height="10" rx="2" fill="#fff" /><path d="M19 13L23 9.500V18.500L19 15Z" fill="#fff" /></Art></AppButton>
          </Apps>
          <Tray>
            <Art w={16} h={9}><path d="M0 9L8 1L16 9" stroke="#fff" /></Art>
            <Art w={20} h={13}><path d="M3 12Q-2 9 2 6Q4 0 10 0Q15 0 16 5Q21 6 19 11L17 13H4Z" fill="#a9acae" /><path d="M3 13Q0 9 4 8L12 5Q20 5 20 10L18 13Z" fill="#fff" /></Art>
            <Art w={18} h={20}><rect x="4.500" y="0" width="9" height="14" rx="1" fill="#fff" /><path d="M3 11V16H15V11M9 16V19M5 19.500H13" stroke="#fff" /></Art>
            <Art w={20} h={12}><rect x="0.500" y="0.500" width="17" height="11" stroke="#fff" /><rect x="2.500" y="2.500" width="6" height="7" fill="#fff" /><path d="M19 4V8" stroke="#fff" /></Art>
            <Art w={20} h={16}><path d="M2 16C2 8 9 1 18 1M6 16C6 10 11 5 18 5M10 16C10 12 13 9 18 9" stroke="#ddd" /><circle cx="16" cy="14" r="2" fill="#fff" /></Art>
            <Art w={20} h={16}><path d="M0 5H3L8 1V15L3 11H0Z" stroke="#fff" /><path d="M11 5Q13 8 11 11" stroke="#fff" /><path d="M14 3Q17 8 14 13M17 1Q21 8 17 15" stroke="#7b868c" /></Art>
            <TrayText>ESP</TrayText>
            <Clock><span>22:33</span><span>30/08/2021</span></Clock>
            <Art w={20}><path d="M0 0H20V16H12L8 20V16H0Z" fill="#fff" /><path d="M4 4H16M4 8H16M4 12H11" stroke="#1f2e36" /><path d="M17 10Q18 16 11 17Q14 21 18 18Q21 15 17 10Z" fill="#1f2e36" stroke="#fff" /></Art>
          </Tray>
        </Taskbar>

        <BannerShadow />
        <Banner>
          <BannerInfo>
            <Art w={13} h={13}><path d="M11 0C3 1 1 5 2 9L0 9L4 13L8 9H6C5 6 6 3 11 0Z" fill="#0b5213" stroke="#0b5213" strokeWidth="1" /></Art>
            <BannerText>Tiempo restante de la reunión: 05:03</BannerText>
            <BannerIcons>
              <Art w={16} h={12}><path d="M0 4H4L8 0V12L4 8H0Z" fill="#1b4a15" /><path d="M10 3Q12 6 10 9M13 1Q17 6 13 11" stroke="#1b4a15" strokeWidth="1.200" /></Art>
              <Art w={13} h={14}><path d="M6.500 0L13 3C13 9 11 12 6.500 14C2 12 0 9 0 3Z" fill="#14510f" /><path d="M3.500 7L6 9.500L10 5" stroke="#22da58" /></Art>
              <Art w={18} h={17}><rect x="0.500" y="0.500" width="17" height="16" rx="3" stroke="#14701e" /><text x="9" y="13" fontSize="13" textAnchor="middle" fill="#14510f" fontFamily={SYS}>$</text></Art>
            </BannerIcons>
          </BannerInfo>
          <BannerStop><StopSquare />Deja de</BannerStop>
        </Banner>
      </Frame>
    </>
  );
}
